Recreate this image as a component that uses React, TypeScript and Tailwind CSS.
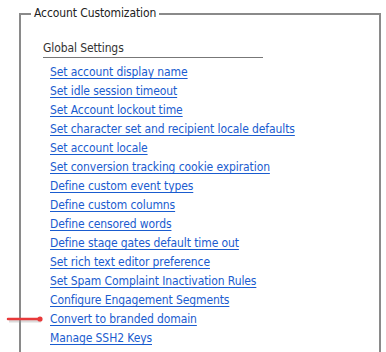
import React from 'react';

const links = [
  'Set account display name',
  'Set idle session timeout',
  'Set Account lockout time',
  'Set character set and recipient locale defaults',
  'Set account locale',
  'Set conversion tracking cookie expiration',
  'Define custom event types',
  'Define custom columns',
  'Define censored words',
  'Define stage gates default time out',
  'Set rich text editor preference',
  'Set Spam Complaint Inactivation Rules',
  'Configure Engagement Segments',
  'Convert to branded domain',
  'Manage SSH2 Keys',
];

const App = () => {
  return (
    <div
      className="relative w-[386px] h-[352px] overflow-hidden bg-white text-[12px] tracking-[-0.1px]"
      style={{ fontFamily: '"DejaVu Sans Condensed", "DejaVu Sans", sans-serif' }}
    >
      <fieldset className="ml-[19px] mt-[6px] w-[362px] h-[420px] border-2 border-[#8a8a8a] p-0">
        <legend className="ml-[10px] px-[3px] leading-[15px] text-[#222]">
          Account Customization
        </legend>
        <div className="pl-[22px] pt-[20px]">
          <div className="w-[220px] border-b border-[#777] pb-[1px] leading-[15px] text-[#333]">
            Global Settings
          </div>
          <ul className="mt-[5px] pl-[7px]">
            {links.map((l) => (
              <li key={l} className="h-[19px] leading-[19px]">
                <a href="#" className="text-[#1a5ccf] underline underline-offset-2">
                  {l}
                </a>
              </li>
            ))}
          </ul>
        </div>
      </fieldset>

      {/* red pointer arrow */}
      <svg
        className="absolute left-[4px] top-[312px]"
        width="44"
        height="14"
        viewBox="0 0 44 14"
      >
        <line x1="5" y1="9" x2="37" y2="9" stroke="#999" strokeWidth="3" opacity="0.35" />
        <line x1="4" y1="7" x2="35" y2="7" stroke="#e8393a" strokeWidth="2.5" strokeLinecap="round" />
        <circle cx="36" cy="7" r="2.6" fill="#e8393a" />
      </svg>
    </div>
  );
};

export default App;
